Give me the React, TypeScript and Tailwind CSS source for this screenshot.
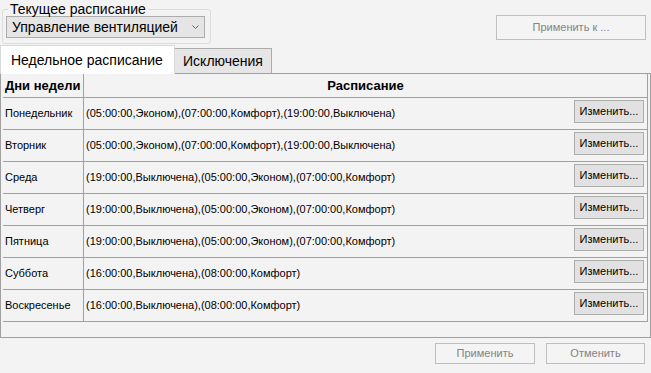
const days: [string, string][] = [
  ['Понедельник', '(05:00:00,Эконом),(07:00:00,Комфорт),(19:00:00,Выключена)'],
  ['Вторник', '(05:00:00,Эконом),(07:00:00,Комфорт),(19:00:00,Выключена)'],
  ['Среда', '(19:00:00,Выключена),(05:00:00,Эконом),(07:00:00,Комфорт)'],
  ['Четверг', '(19:00:00,Выключена),(05:00:00,Эконом),(07:00:00,Комфорт)'],
  ['Пятница', '(19:00:00,Выключена),(05:00:00,Эконом),(07:00:00,Комфорт)'],
  ['Суббота', '(16:00:00,Выключена),(08:00:00,Комфорт)'],
  ['Воскресенье', '(16:00:00,Выключена),(08:00:00,Комфорт)'],
];

const DisabledButton = ({ label, className }: { label: string; className: string }) => (
  <button
    disabled
    className={`border border-[#bfbfbf] bg-[#f4f4f4] text-[11px] leading-none text-[#838383] ${className}`}
  >
    {label}
  </button>
);

export default function App() {
  return (
    <div className="w-[651px] h-[373px] overflow-hidden bg-[#f3f3f3] text-black font-['Liberation_Sans',Arial,sans-serif] flex flex-col">
      {/* Top: schedule selector + apply-to */}
      <div className="flex items-start h-[45px]">
        <fieldset className="ml-[2px] mt-[2px] w-[209px] h-[42px] m-0 border border-[#dcdcdc] rounded-[3px] pl-[3px] pr-0 pt-0 pb-0">
          <legend className="ml-[2px] px-[2px] text-[14px] leading-[15px]">Текущее расписание</legend>
          <div className="-mt-[1px] w-[199px] h-[22px] border border-[#acacac] bg-[#e5e5e5] flex items-center pl-[5px] pr-[4px]">
            <span className="text-[14px] leading-none flex-1">Управление вентиляцией</span>
            <svg width="7" height="5" viewBox="0 0 7 5" className="mr-[1px]">
              <polyline points="0.5,0.5 3.5,3.5 6.5,0.5" fill="none" stroke="#606060" strokeWidth="1" />
            </svg>
          </div>
        </fieldset>
        <DisabledButton label="Применить к ..." className="ml-auto mr-[5px] mt-[15px] w-[150px] h-[25px]" />
      </div>

      {/* Tabs */}
      <div className="flex items-end h-[28px]">
        <div className="relative z-10 -mb-[1px] h-[29px] w-[175px] bg-white border border-b-0 border-[#d9d9d9] flex items-center pl-[10px] text-[14px] leading-none">
          Недельное расписание
        </div>
        <div className="h-[25px] w-[97px] bg-[#e6e6e6] border border-l-0 border-b-0 border-[#acacac] flex items-center justify-center text-[14px] leading-none">
          Исключения
        </div>
      </div>

      {/* Tab panel with grid */}
      <div className="h-[265px] w-[651px] border border-[#a0a0a0] pl-[2px]">
        <div className="w-[645px]">
          <div className="flex h-[24px] border-b border-[#a0a0a0] text-[13px] font-bold leading-none">
            <div className="w-[81px] border-r border-[#a0a0a0] flex items-center pl-[2px]">Дни недели</div>
            <div className="flex-1 border-r border-[#a0a0a0] flex items-center justify-center">Расписание</div>
          </div>
          {days.map(([day, sched]) => (
            <div key={day} className="flex h-[32px] border-b border-[#a0a0a0] text-[11px] leading-none">
              <div className="w-[81px] border-r border-[#a0a0a0] flex items-center pl-[2px]">{day}</div>
              <div className="flex-1 border-r border-[#a0a0a0] flex items-start pl-[2px] pr-[3px]">
                <span className="flex-1 self-center">{sched}</span>
                <button className="mt-[2px] w-[70px] h-[23px] border border-[#adadad] bg-[#e1e1e1] text-[11px] leading-none">
                  Изменить...
                </button>
              </div>
            </div>
          ))}
        </div>
      </div>

      {/* Bottom buttons */}
      <div className="flex justify-end gap-[11px] pr-[6px] mt-[5px]">
        <DisabledButton label="Применить" className="w-[100px] h-[21px]" />
        <DisabledButton label="Отменить" className="w-[99px] h-[21px]" />
      </div>
    </div>
  );
}
